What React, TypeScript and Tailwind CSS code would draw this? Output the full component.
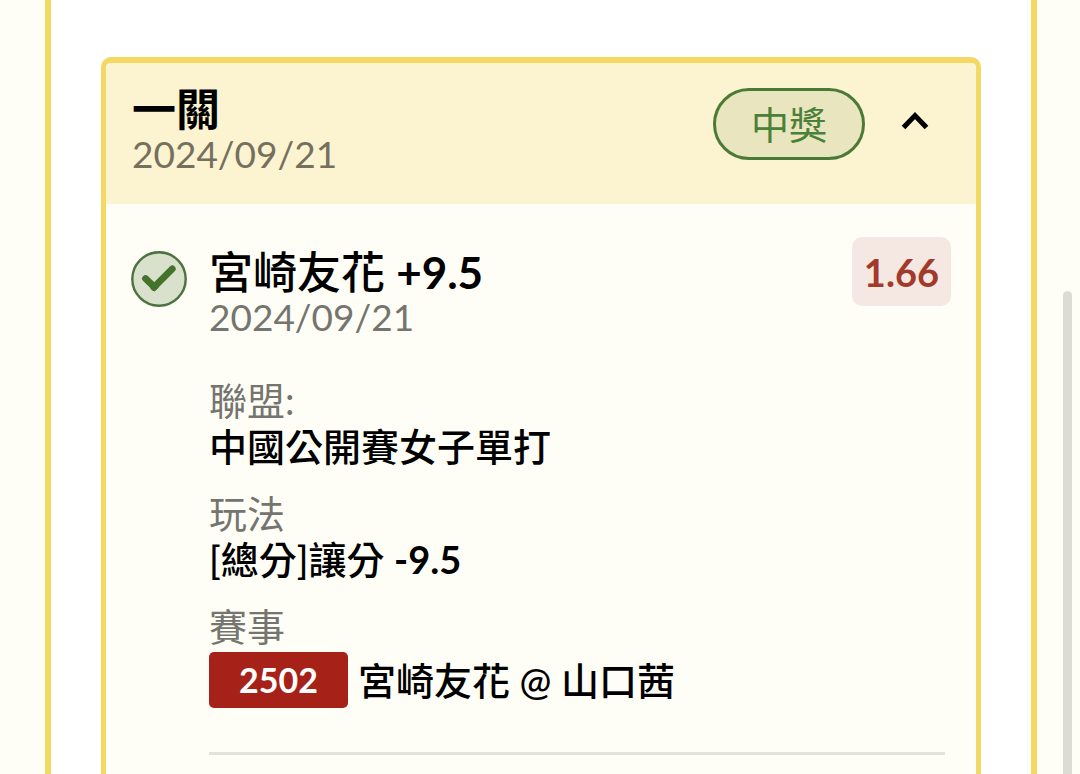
import { useState } from 'react'

const legs = [
  {
    name: '宮崎友花',
    spread: '+9.5',
    date: '2024/09/21',
    odds: '1.66',
    league: '中國公開賽女子單打',
    play: '[總分]讓分',
    playSpread: '-9.5',
    code: '2502',
    match: '宮崎友花 @ 山口茜',
  },
]

function WonIcon() {
  return (
    <svg viewBox="0 0 56 56" className="mt-[14px] h-14 w-14 shrink-0" fill="none" aria-hidden="true">
      <circle cx="28" cy="28" r="26.7" fill="#d9e1cd" stroke="#4b7340" strokeWidth="2.4" />
      <path d="M14.5 27.5 L23.3 36" stroke="#44732c" strokeWidth="6.8" strokeLinecap="round" />
      <path d="M22.8 36.3 L41.3 17.8" stroke="#44732c" strokeWidth="6.8" strokeLinecap="round" />
      <path d="M20 35.5 L23.2 40.8 L28 36" fill="#44732c" />
    </svg>
  )
}

export default function App() {
  const [open, setOpen] = useState(true)

  return (
    <div className="relative flex min-h-screen bg-[#fffef6] pr-[43px] pl-[45px] font-['Lato','Noto_Sans_CJK_TC',sans-serif] text-[38px] leading-[46px] text-black">
      <main className="flex grow flex-col border-x-6 border-[#f3d963] bg-white px-[50px] pt-[57px]">
        <section className="grow rounded-t-[10px] border-x-[5px] border-t-6 border-[#f3d963] bg-[#fffef6]">
          <header className="flex items-start rounded-t-[5px] bg-[#fcf3d0] px-[26px] pt-[23px] pb-[28px]">
            <div className="grow">
              <h1 className="text-[44px] font-bold">一關</h1>
              <p className="text-[37px] leading-[44px] text-[#75705d]">2024/09/21</p>
            </div>
            <span className="mt-[2px] flex h-[72px] items-center rounded-full border-3 border-[#4b7a36] bg-[#e9e5be] px-[35px] text-[#4b8038]">
              中獎
            </span>
            <button
              type="button"
              aria-label="一關"
              aria-expanded={open}
              onClick={() => setOpen(!open)}
              className="mt-[11px] mr-[11px] ml-[26px] flex h-12 w-12 items-center justify-center"
            >
              <svg viewBox="0 0 28 20" className={open ? 'h-5 w-7' : 'h-5 w-7 rotate-180'} fill="none" aria-hidden="true">
                <path d="M2.5 16.5 L14 4.5 L25.5 16.5" stroke="#000" strokeWidth="5" />
              </svg>
            </button>
          </header>

          {open &&
            legs.map((leg) => (
              <article key={leg.code} className="flex px-[25px] pt-[33px]">
                <WonIcon />
                <div className="ml-[22px] grow">
                  <div className="flex items-start justify-between">
                    <div className="mt-[12px]">
                      <h2 className="text-[44px] font-medium">
                        {leg.name} <b className="font-bold">{leg.spread}</b>
                      </h2>
                      <p className="text-[37px] leading-[44px] text-[#757570]">{leg.date}</p>
                    </div>
                    <span className="flex h-[69px] items-center rounded-[10px] bg-[#f5e7e1] px-[12px] font-bold text-[#a23a2c]">
                      {leg.odds}
                    </span>
                  </div>

                  <dl className="mt-[38px] mr-[6px] border-b-3 border-[#e3e3dc] pb-[44px]">
                    <dt className="text-[#757570]">聯盟:</dt>
                    <dd className="mb-[21px] font-medium">{leg.league}</dd>
                    <dt className="text-[#757570]">玩法</dt>
                    <dd className="mb-[21px] font-medium">
                      {leg.play} <b className="font-bold">{leg.playSpread}</b>
                    </dd>
                    <dt className="text-[#757570]">賽事</dt>
                    <dd className="mt-[3px] flex items-center gap-[10px] font-medium">
                      <span className="flex h-14 w-[139px] items-center justify-center rounded-[5px] bg-[#a62117] text-[34px] font-bold text-white">
                        {leg.code}
                      </span>
                      <span>{leg.match}</span>
                    </dd>
                  </dl>
                </div>
              </article>
            ))}
        </section>
      </main>

      {/* scroll thumb */}
      <div className="absolute top-[291px] right-[8px] bottom-0 w-[9px] rounded-t-full bg-[#dcdcd5]" />
    </div>
  )
}
